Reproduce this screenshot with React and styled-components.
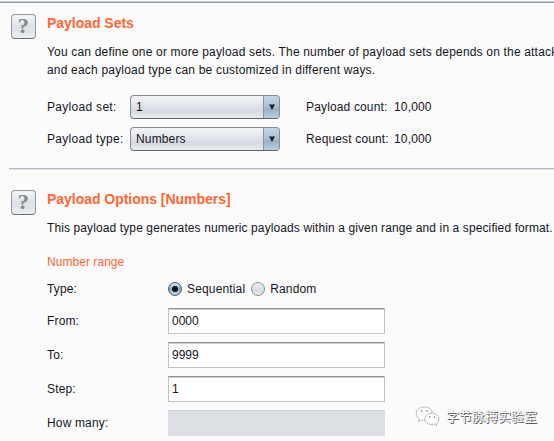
import React from 'react';
import styled, { createGlobalStyle } from 'styled-components';

const GlobalStyle = createGlobalStyle`
  * { box-sizing: border-box; }
  body { margin: 0; overflow: hidden; background: #fbfbfc; }
`;

const Page = styled.main`
  position: relative;
  width: 554px;
  height: 441px;
  overflow: hidden;
  background: #fbfbfc;
  border-top: 1px solid #fbfbfc;
  color: #16161c;
  font: 12px/18px 'Liberation Sans', Arial, sans-serif;
  letter-spacing: 0.15px;
`;

const Rule = styled.hr`
  height: 2px;
  margin: ${(p) => (p.$inset ? '0 0 0 9px' : '0')};
  border: 0;
  background: ${(p) => (p.$inset ? 'linear-gradient(#b3b8c1 50%, #dfe2e6 50%)' : 'linear-gradient(#c9cfd4 50%, #8f9aa3 50%)')};
`;

const Section = styled.section`
  display: grid;
  grid-template-columns: 25px 1fr;
  column-gap: 11px;
  height: ${(p) => p.$height}px;
  padding: ${(p) => p.$top}px 0 0 11px;
`;

const HelpButton = styled.button`
  display: grid;
  place-items: center;
  width: 25px;
  height: 25px;
  padding: 0;
  border: 1px solid #92969e;
  border-bottom-color: #686d75;
  border-radius: 4px;
  background: linear-gradient(#f6f7f9, #dcdfe5 55%, #eceef1);
  color: #83868b;
  font: bold 21px/23px 'Liberation Serif', serif;
`;

const Mark = styled.span`
  display: block;
  transform: scaleX(1.1);
`;

const Body = styled.div`
  min-width: 0;
  white-space: nowrap;
`;

const Heading = styled.h2`
  height: 18px;
  margin: 0 0 11px;
  color: #ff6633;
  font: bold 14px/18px 'Liberation Sans', Arial, sans-serif;
  letter-spacing: -0.03px;
`;

const Description = styled.p`
  margin: 0;
  letter-spacing: ${(p) => p.$spacing}px;
`;

const SetRow = styled.div`
  display: grid;
  grid-template-columns: 83px 150px 114px 1fr;
  align-items: center;
  height: 24px;
  margin-top: ${(p) => p.$gap}px;
`;

const SetLabel = styled.span`
  letter-spacing: 0.3px;
`;

const CountLabel = styled.span`
  padding-left: 26px;
`;

const ComboBox = styled.div`
  display: flex;
  justify-content: space-between;
  width: 150px;
  height: 24px;
  overflow: hidden;
  border: 1px solid #858b93;
  border-bottom-color: #5d6873;
  border-radius: 4px;
  background: linear-gradient(#f3f4f6, #dfe2e7 50%, #d5d9df 65%, #e9ebee);
  padding-left: 5px;
  line-height: 23px;
`;

const ComboArrow = styled.span`
  display: grid;
  place-items: center;
  width: 16px;
  border-left: 1px solid #7c95ab;
  background: linear-gradient(#c7d7e4, #a7bed0 50%, #98b1c5 60%, #b9d0e2);
`;

const Subheading = styled.h3`
  margin: 16px 0 0;
  color: #ff6633;
  font: inherit;
  letter-spacing: 0.05px;
`;

const FormRow = styled.div`
  display: grid;
  grid-template-columns: 121px 217px;
  align-items: center;
  height: 26px;
  margin-top: ${(p) => p.$gap ?? 8}px;
`;

const Field = styled.div`
  height: 26px;
  padding-left: 3px;
  line-height: 24px;
  letter-spacing: 0;
  border: 1px solid #c2c2c4;
  border-top: 1px solid #8f8f91;
  box-shadow: inset 0 1px #cfcfd1;
  background: #fff;
  ${(p) => p.$disabled && 'background: #dce0e5; border-color: #dce0e5; border-top-color: #ccd0d4; box-shadow: none;'}
`;

const Choices = styled.div`
  display: flex;
  align-items: center;
`;

const Choice = styled.label`
  display: flex;
  align-items: center;
  gap: 5px;
  margin-right: 6px;
`;

const Radio = styled.span`
  display: grid;
  place-items: center;
  width: 14px;
  height: 14px;
  border: 1px solid ${(p) => (p.$checked ? '#44586b' : '#858a91')};
  border-radius: 50%;
  background: ${(p) => (p.$checked ? 'linear-gradient(#dbe6ef, #8ca9c0 50%, #c1d7e8)' : 'linear-gradient(#f3f4f6, #d5d8de 60%, #eceef1)')};
  &::after {
    content: '';
    width: 6px;
    height: 6px;
    border-radius: 50%;
    background: ${(p) => (p.$checked ? '#10151a' : 'transparent')};
  }
`;

const Watermark = styled.div`
  position: absolute;
  left: 415px;
  top: 403px;
  display: flex;
  align-items: center;
  gap: 6px;
  height: 24px;
  color: #fdfdfd;
  font: 13px/24px 'Noto Sans CJK SC', sans-serif;
  letter-spacing: 0;
  white-space: nowrap;
  text-shadow: 1px 1px 0 #5d5d60, 0 0 1px #aaa;
`;

function Arrow() {
  return (
    <svg width="6" height="6" viewBox="0 0 6 6">
      <path d="M0 0.5h6L3 6z" fill="#17202a" />
    </svg>
  );
}

function WeChat() {
  return (
    <svg width="25" height="21" viewBox="0 0 25 21" fill="#fdfdfd" stroke="#77777a" strokeWidth="0.7" strokeDasharray="1.5 0.9">
      <path d="M9.4 1C4.7 1 1.2 3.9 1.2 7.6c0 2.2 1.2 4 3.1 5.2L3.5 15.5l3.2-1.6c1 .3 1.8.4 2.7.4 4.7 0 8.1-3 8.1-6.7S14 1 9.4 1z" />
      <path d="M17 7.2c-3.9 0-7 2.5-7 5.7s3.1 5.8 7 5.8c.9 0 1.7-.1 2.5-.4l2.6 1.4-.7-2.3c1.6-1.1 2.6-2.7 2.6-4.5 0-3.2-3.1-5.7-7-5.7z" />
      <g fill="#69696c" stroke="none">
        <circle cx="6.5" cy="5" r="0.8" /><circle cx="12" cy="5" r="0.8" />
        <circle cx="14.7" cy="11" r="0.7" /><circle cx="19.4" cy="11" r="0.7" />
      </g>
    </svg>
  );
}

const settings = [
  { label: 'Payload set:', value: '1', count: 'Payload count:' },
  { label: 'Payload type:', value: 'Numbers', count: 'Request count:' },
];

const fields = [
  { label: 'From:', value: '0000' },
  { label: 'To:', value: '9999' },
  { label: 'Step:', value: '1' },
  { label: 'How many:', value: '', disabled: true },
];

export default function App() {
  return (
    <>
      <GlobalStyle />
      <Page>
        <Rule />
        <Section $top={11} $height={165}>
          <HelpButton><Mark>?</Mark></HelpButton>
          <Body>
            <Heading>Payload Sets</Heading>
            <Description $spacing={0.18}>
              You can define one or more payload sets. The number of payload sets depends on the attack
            </Description>
            <Description $spacing={0.19}>and each payload type can be customized in different ways.</Description>
            {settings.map((s, i) => (
              <SetRow key={s.label} $gap={i ? 8 : 16}>
                <SetLabel>{s.label}</SetLabel>
                <ComboBox>
                  <span>{s.value}</span>
                  <ComboArrow><Arrow /></ComboArrow>
                </ComboBox>
                <CountLabel>{s.count}</CountLabel>
                <span>10,000</span>
              </SetRow>
            ))}
          </Body>
        </Section>
        <Rule $inset />
        <Section $top={20} $height={271}>
          <HelpButton><Mark>?</Mark></HelpButton>
          <Body>
            <Heading>Payload Options [Numbers]</Heading>
            <Description $spacing={0.11}>
              This payload type generates numeric payloads within a given range and in a specified format.
            </Description>
            <Subheading>Number range</Subheading>
            <FormRow $gap={5}>
              <span>Type:</span>
              <Choices>
                <Choice><Radio $checked />Sequential</Choice>
                <Choice><Radio />Random</Choice>
              </Choices>
            </FormRow>
            {fields.map((f, i) => (
              <FormRow key={f.label} $gap={i ? 8 : 6}>
                <span>{f.label}</span>
                <Field $disabled={f.disabled}>{f.value}</Field>
              </FormRow>
            ))}
          </Body>
        </Section>
        <Watermark><WeChat /><span>字节脉搏实验室</span></Watermark>
      </Page>
    </>
  );
}
